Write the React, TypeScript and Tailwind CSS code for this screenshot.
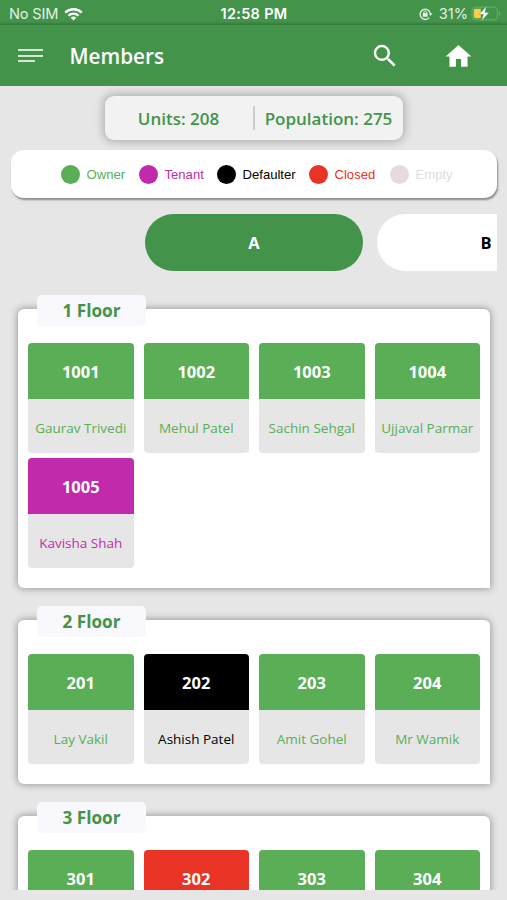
import React from 'react';
import clsx from 'clsx';
import { MdHome, MdSearch } from 'react-icons/md';

type Status = 'owner' | 'tenant' | 'defaulter' | 'closed' | 'empty';

type Unit = {
    number: string;
    name: string;
    status: Status;
};

type Floor = {
    title: string;
    units: Unit[];
};

const bgColors: Record<Status, string> = {
    owner: 'bg-[#59ae56]',
    tenant: 'bg-[#c12bab]',
    defaulter: 'bg-black',
    closed: 'bg-[#e93325]',
    empty: 'bg-[#e6dade]',
};

const textColors: Record<Status, string> = {
    owner: 'text-[#59ae56]',
    tenant: 'text-[#c12bab]',
    defaulter: 'text-black',
    closed: 'text-[#e93325]',
    empty: 'text-[#e3dcdf]',
};

const legend: { label: string; status: Status; width: string }[] = [
    { label: 'Owner', status: 'owner', width: 'w-[78px]' },
    { label: 'Tenant', status: 'tenant', width: 'w-[78px]' },
    { label: 'Defaulter', status: 'defaulter', width: 'w-[92px]' },
    { label: 'Closed', status: 'closed', width: 'w-[81px]' },
    { label: 'Empty', status: 'empty', width: 'w-[66px]' },
];

const floors: Floor[] = [
    {
        title: '1 Floor',
        units: [
            { number: '1001', name: 'Gaurav Trivedi', status: 'owner' },
            { number: '1002', name: 'Mehul Patel', status: 'owner' },
            { number: '1003', name: 'Sachin Sehgal', status: 'owner' },
            { number: '1004', name: 'Ujjaval Parmar', status: 'owner' },
            { number: '1005', name: 'Kavisha Shah', status: 'tenant' },
        ],
    },
    {
        title: '2 Floor',
        units: [
            { number: '201', name: 'Lay Vakil', status: 'owner' },
            { number: '202', name: 'Ashish Patel', status: 'defaulter' },
            { number: '203', name: 'Amit Gohel', status: 'owner' },
            { number: '204', name: 'Mr Wamik', status: 'owner' },
        ],
    },
    {
        title: '3 Floor',
        units: [
            { number: '301', name: '', status: 'owner' },
            { number: '302', name: '', status: 'closed' },
            { number: '303', name: '', status: 'owner' },
            { number: '304', name: '', status: 'owner' },
        ],
    },
];

const WifiIcon = () => (
    <svg className="w-[19px] h-[14px]" viewBox="0 0 19 14" fill="white">
        <path d="M9.5 13.6 6.7 10.8a4 4 0 0 1 5.6 0Z" />
        <path d="M4.5 8.8a7 7 0 0 1 10 0" fill="none" stroke="white" strokeWidth="2.3" />
        <path d="M1.3 5.6a11.6 11.6 0 0 1 16.4 0" fill="none" stroke="white" strokeWidth="2.5" />
    </svg>
);

const RotationLockIcon = () => (
    <svg className="w-[14px] h-[12px]" viewBox="0 0 14 12" fill="none" stroke="#e2f0e3">
        <path d="M10.2 9.6A5.1 5.1 0 1 1 11.3 5.4" strokeWidth="1.3" />
        <path d="M9.8 5.2h3.6l-1.8 2.9Z" fill="#e2f0e3" stroke="none" />
        <rect x="3.8" y="5.1" width="4.8" height="3.6" rx=".5" fill="#e2f0e3" stroke="none" />
        <path d="M4.9 5.4V4.3a1.3 1.3 0 0 1 2.6 0v1.1" strokeWidth="1" />
    </svg>
);

const BatteryIcon = () => (
    <svg className="w-[30px] h-[15px]" viewBox="0 0 30 15">
        <rect x="1" y="1.1" width="25.4" height="12.8" rx="3.6" fill="none" stroke="#6bad70" strokeWidth="1" />
        <path d="M27.8 5.4c1.9.6 1.9 3.6 0 4.2Z" fill="#6bad70" />
        <path d="M4.4 2.8h5.4v9.4H4.4a1.7 1.7 0 0 1-1.7-1.7v-6a1.7 1.7 0 0 1 1.7-1.7Z" fill="#f8ce46" />
        <path d="M15.4.3 8.4 8.3h4.1l-2 6.4 7.5-8.3h-4.2Z" fill="white" stroke="#43944a" strokeWidth=".3" />
    </svg>
);

const StatusBar = () => (
    <div className="h-[25px] px-[9px] flex items-center justify-between text-white bg-linear-to-b from-[#43944a] from-85% to-[#327a39]">
        <div className="flex-1 flex items-center gap-[6px] pt-[2px]">
            <span className="text-[14.6px] leading-5 tracking-[-0.2px] font-['Inter',sans-serif] text-[#e2f0e3]">No SIM</span>
            <WifiIcon />
        </div>
        <span className="pt-[3px] text-[14.5px] leading-5 tracking-[0.3px] font-semibold font-['Inter',sans-serif]">12:58 PM</span>
        <div className="flex-1 flex items-center justify-end pt-[2px] -mr-[1px]">
            <div className="flex items-center -mr-[2px]">
                <RotationLockIcon />
                <span className="ml-[6px] mr-[3px] text-[14.6px] leading-5 font-['Inter',sans-serif] text-[#e2f0e3]">31%</span>
                <BatteryIcon />
            </div>
        </div>
    </div>
);

const Header = () => (
    <header className="h-[61px] flex items-center text-white">
        <button className="ml-[18px] w-[25px] flex flex-col gap-[3.5px]" aria-label="Menu">
            <span className="h-[2px] w-full bg-[#d3e9d5]" />
            <span className="h-[2px] w-full bg-[#d3e9d5]" />
            <span className="h-[2px] w-[17px] bg-[#d3e9d5]" />
        </button>
        <h1 className="ml-[26.5px] pt-px flex-1 text-[20.7px] leading-7 font-semibold">Members</h1>
        <MdSearch className="w-[30px] h-[30px] mr-[43px]" />
        <MdHome className="w-[31px] h-[31px] mt-[2px] mr-[33px]" />
    </header>
);

const UnitCard = ({ unit }: { unit: Unit }) => (
    <div className="h-[110px] rounded-[4px] overflow-hidden bg-[#e6e6e6]">
        <div className={clsx('h-[56px] pt-[2px] flex items-center justify-center text-[16.5px] font-bold text-white', bgColors[unit.status])}>
            {unit.number}
        </div>
        <div className={clsx('h-[56px] pt-[2px] flex items-center justify-center text-[13.5px] whitespace-nowrap', textColors[unit.status])}>
            {unit.name}
        </div>
    </div>
);

const FloorCard = ({ floor }: { floor: Floor }) => (
    <section className="ml-[18px] mr-[17px] mb-[31.5px] px-[10px] pb-5 rounded-[6px] rounded-br-none bg-white shadow-[0_0_7px_1px_rgba(0,0,0,0.32)]">
        <div className="flex">
            <h2 className="ml-[9px] -mt-[14px] w-[109px] h-[31px] pt-[2px] flex items-center justify-center rounded-[5px] bg-[#f9f8fc] text-[17.2px] font-bold text-[#43944a]">
                {floor.title}
            </h2>
        </div>
        <div className="mt-[17.5px] grid grid-cols-4 gap-x-[10px] gap-y-[5px]">
            {floor.units.map(unit => <UnitCard key={unit.number} unit={unit} />)}
        </div>
    </section>
);

const App = () => {
    return (
        <div className="w-[507px] h-[900px] overflow-hidden bg-[#e6e6e6] font-['Open_Sans',sans-serif]">
            <div className="bg-[#43944a]">
                <StatusBar />
                <Header />
            </div>

            <main className="h-[804px] overflow-hidden">
                <div className="mt-[10px] mx-auto w-[298px] h-[44px] flex items-center rounded-[9px] bg-[#f2f2f2] shadow-[0_0_8px_2px_rgba(0,0,0,0.24)] text-[17px] font-semibold text-[#43944a]">
                    <span className="pt-px w-[148px] text-center">Units: 208</span>
                    <span className="w-[2px] h-[24px] bg-[#cccccc]" />
                    <span className="pt-px flex-1 text-center">Population: 275</span>
                </div>

                <div className="mt-[10px] ml-[11px] mr-[10px] h-[48px] pt-px pl-[50px] flex items-center rounded-[13px] bg-white shadow-[1px_2px_2px_rgba(0,0,0,0.4)]">
                    {legend.map(item => (
                        <div key={item.status} className={clsx("flex items-center font-['Liberation_Sans',sans-serif] text-[13.1px]", item.width, textColors[item.status])}>
                            <span className={clsx('w-[19px] h-[19px] mr-[6.5px] shrink-0 rounded-full', bgColors[item.status])} />
                            <span className="pt-px">{item.label}</span>
                        </div>
                    ))}
                </div>

                <div className="mt-[16px] mr-[10px] pl-[145px] flex gap-[14px] overflow-hidden text-[16.5px] font-bold">
                    <button className="pt-px w-[218px] h-[57px] shrink-0 rounded-full bg-[#43944a] text-white">A</button>
                    <button className="pt-px w-[218px] h-[57px] shrink-0 rounded-full bg-white text-black">B</button>
                </div>

                <div className="pt-[37.5px]">
                    {floors.map(floor => <FloorCard key={floor.title} floor={floor} />)}
                </div>
            </main>
        </div>
    );
};

export default App;
